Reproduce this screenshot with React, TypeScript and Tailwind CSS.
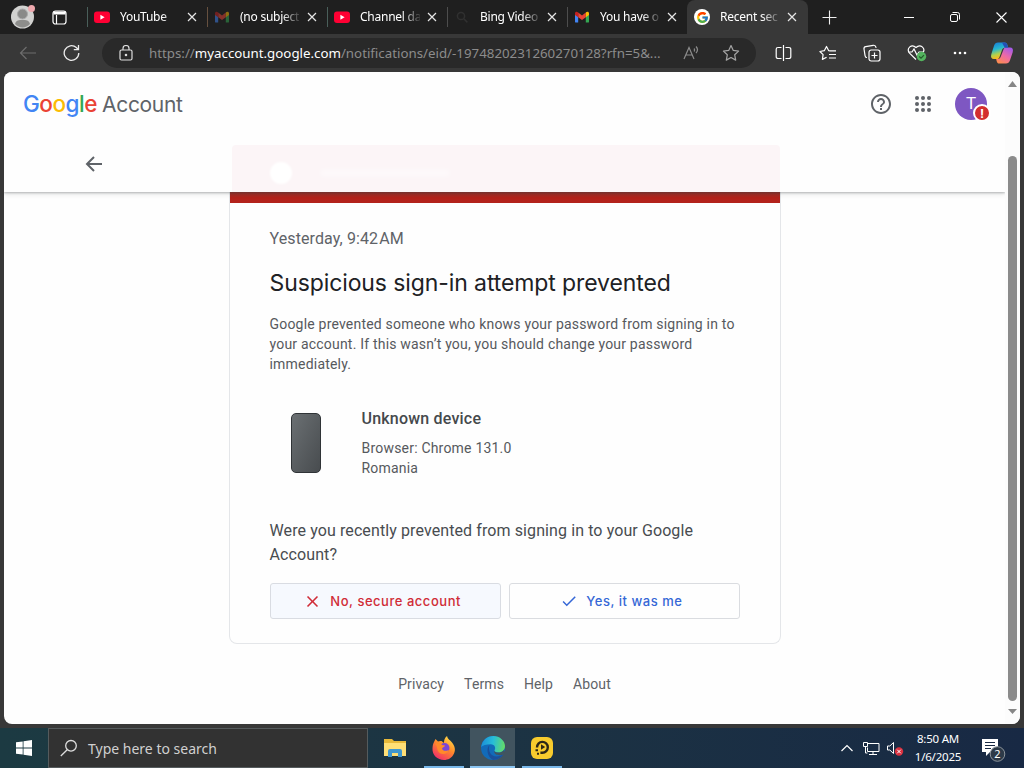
import type { ReactNode } from 'react';
import { FcGoogle } from 'react-icons/fc';
import { MdCheck, MdClose, MdHelpOutline } from 'react-icons/md';

const YouTubeIcon = () => (
  <svg width="16" height="16" viewBox="0 0 16 16">
    <rect x="0" y="2.5" width="16" height="11.5" rx="3" fill="#ff0033" />
    <path d="M6.4 5.8v5l4.2-2.5z" fill="#fff" />
  </svg>
);

const GmailIcon = () => (
  <svg width="16" height="16" viewBox="0 0 16 16">
    <path d="M1 4.5v8.2c0 .5.4.9.9.9h2.3V7z" fill="#4285f4" />
    <path d="M15 4.5v8.2c0 .5-.4.9-.9.9h-2.3V7z" fill="#34a853" />
    <path d="M4.2 3.6v4.6L8 11l3.8-2.8V3.6L8 6.5z" fill="#ea4335" />
    <path d="M1 4.4c0-1.7 1.9-2.1 3.2-.8v4.6L1 5.9z" fill="#c5221f" />
    <path d="M15 4.4c0-1.7-1.9-2.1-3.2-.8v4.6L15 5.9z" fill="#fbbc04" />
  </svg>
);

const SearchTabIcon = () => (
  <svg width="16" height="16" viewBox="0 0 16 16" fill="none" stroke="#303030" strokeWidth="1.5">
    <circle cx="7" cy="7" r="3.6" />
    <path d="M9.8 9.8l3.6 3.6" />
  </svg>
);

const GoogleTabIcon = () => (
  <span className="flex size-4 items-center justify-center rounded-full bg-white">
    <FcGoogle size={13} />
  </span>
);

type Tab = { title: string; icon: ReactNode; line: string; dim?: boolean };

const tabs: Tab[] = [
  { title: 'YouTube', icon: <YouTubeIcon />, line: 'bg-[#4a5f5a]' },
  { title: '(no subject', icon: <GmailIcon />, line: 'bg-[#66503f]', dim: true },
  { title: 'Channel da', icon: <YouTubeIcon />, line: 'bg-[#4a5f5a]' },
  { title: 'Bing Video', icon: <SearchTabIcon />, line: 'bg-[#4d4d4d]' },
  { title: 'You have o', icon: <GmailIcon />, line: 'bg-[#4d4d4d]' },
];

const CloseX = () => (
  <svg width="10" height="10" viewBox="0 0 10 10" stroke="#e6e6e6" strokeWidth="1.2">
    <path d="M1 1l8 8M9 1l-8 8" />
  </svg>
);

const TabTitle = ({ children }: { children: string }) => (
  <span className="ml-[10px] w-[60px] whitespace-nowrap text-[12px] tracking-[-0.25px] text-white [mask-image:linear-gradient(to_right,black_42px,transparent_62px)]">
    {children}
  </span>
);

const TabStrip = () => (
  <div className="flex h-[34px] shrink-0 items-center bg-[#1f1f1f]">
    <div className="flex w-[87px] items-center">
      <svg className="ml-[10px]" width="26" height="26" viewBox="0 0 26 26">
        <circle cx="12.5" cy="13" r="11.5" fill="#d2d2d0" />
        <circle cx="12.5" cy="10" r="5" fill="#8a8a88" stroke="#aaa" />
        <path d="M5 20c1-4 4-4 7.5-4s6.5 0 7.5 4c-4 4.5-11 4.5-15 0z" fill="#8d8d8b" />
        <circle cx="21.5" cy="4.5" r="3.5" fill="#efa9ae" />
      </svg>
      <svg className="ml-4" width="15" height="15" viewBox="0 0 15 15" fill="none" stroke="#fff" strokeWidth="1.2">
        <rect x="1" y="1" width="13" height="13" rx="2.5" />
        <path d="M1.5 3h12" strokeWidth="3" />
        <path d="M4.5 5v9" />
      </svg>
    </div>
    {tabs.map((tab) => (
      <div key={tab.title} className="flex h-full w-[120px] items-center">
        <span className={`h-5 w-px ${tab.line}`} />
        <span className={tab.dim ? 'ml-1.5 opacity-50' : 'ml-1.5'}>{tab.icon}</span>
        <TabTitle>{tab.title}</TabTitle>
        <span className="ml-[7px]">
          <CloseX />
        </span>
      </div>
    ))}
    <div className="flex h-full w-[121px] items-center rounded-t-lg bg-[#383838] pl-[7px]">
      <GoogleTabIcon />
      <TabTitle>Recent sec</TabTitle>
      <span className="ml-[7px]">
        <CloseX />
      </span>
    </div>
    <svg className="ml-[14px]" width="15" height="15" viewBox="0 0 15 15" stroke="#eee" strokeWidth="1.1">
      <path d="M7.5 .5v14M.5 7.5h14" />
    </svg>
    <div className="ml-[67px] flex items-center gap-[36px]">
      <svg width="10" height="10" viewBox="0 0 10 10" stroke="#fff">
        <path d="M0 5.5h10" />
      </svg>
      <svg width="10" height="10" viewBox="0 0 10 10" fill="none" stroke="#fff">
        <rect x=".5" y="2.5" width="7" height="7" rx="1.5" />
        <path d="M2.5 .5h5a2 2 0 0 1 2 2v5" />
      </svg>
      <svg width="11" height="11" viewBox="0 0 11 11" stroke="#fff" strokeWidth="1.1">
        <path d="M.5 .5l10 10M10.5 .5l-10 10" />
      </svg>
    </div>
  </div>
);

const CopilotIcon = () => (
  <svg width="24" height="24" viewBox="0 0 24 24">
    <defs>
      <linearGradient id="cpA" x1="0" y1="0" x2=".3" y2="1">
        <stop offset="0" stopColor="#1677d8" />
        <stop offset=".45" stopColor="#27b7cf" />
        <stop offset=".75" stopColor="#b5d04a" />
        <stop offset="1" stopColor="#ffb61c" />
      </linearGradient>
      <linearGradient id="cpB" x1=".8" y1="0" x2=".2" y2="1">
        <stop offset="0" stopColor="#a45bea" />
        <stop offset=".5" stopColor="#ee6aa6" />
        <stop offset="1" stopColor="#ff8d4d" />
      </linearGradient>
    </defs>
    <path d="M8 1.5h6.500c1.800 0 2.400 1 2.900 2.600l.8 2.600h-3.500c-1.600 0-2.300 1-2.800 2.500L9.500 16c-.5 1.500-1.200 2-2.600 2H4c-2.600 0-3.500-2-2.700-4.800l2.800-8.700C4.800 2.500 6 1.500 8 1.500z" fill="url(#cpA)" />
    <path d="M16 22.500H9.500c-1.800 0-2.400-1-2.900-2.600L6.200 18H8c1.600 0 2.300-1 2.800-2.500l2.700-7c.5-1.500 1.200-2 2.600-2H20c2.600 0 3.500 2 2.700 4.800l-2.800 8.200c-.7 2-1.900 3-3.900 3z" fill="url(#cpB)" />
    <path d="M12 1.500h2.500c1.800 0 2.400 1 2.900 2.600l.8 2.600h-3.500z" fill="#2450b8" />
  </svg>
);

const Toolbar = () => (
  <div className="flex h-[38px] shrink-0 items-center bg-[#383838]">
    <svg className="ml-[19px]" width="18" height="16" viewBox="0 0 18 16" fill="none" stroke="#6d6d6d" strokeWidth="1.2">
      <path d="M17 8H1.500M7.500 2L1.500 8l6 6" />
    </svg>
    <svg className="ml-[26px]" width="17" height="18" viewBox="0 0 17 18" fill="none" stroke="#ececec" strokeWidth="1.3">
      <path d="M15.800 9a7.300 7.300 0 1 1-2.500-5.500L15.300 5.500M15.500 1v4.700h-4.700" />
    </svg>
    <div className="ml-[22px] flex h-[30px] w-[654px] items-center rounded-full bg-[#292929]">
      <svg className="ml-[17px]" width="14" height="16" viewBox="0 0 14 16" fill="none" stroke="#ddd" strokeWidth="1.2">
        <rect x="1" y="5" width="12" height="10" rx="1.5" />
        <path d="M4 5V3.500a3 3 0 0 1 6 0V5" />
        <circle cx="7" cy="10" r=".7" fill="#ddd" />
      </svg>
      <span className="ml-4 mt-px w-[520px] whitespace-nowrap text-[13.3px] text-[#8c8c8c]">
        https://
        <span className="text-white">myaccount.google.com</span>
        /notifications/eid/-1974820231260270128?rfn=5&amp;...
      </span>
      <svg className="ml-[14px]" width="17" height="16" viewBox="0 0 17 16" fill="none" stroke="#8c8c8c" strokeWidth="1.2">
        <path d="M1 14L6 2.500 11 14M2.800 10h6.500M11 3.500q1.300 1.500 0 3M13 1.500q3 3.300 0 6.500" />
      </svg>
      <svg className="ml-[22px]" width="18" height="18" viewBox="0 0 18 18" fill="none" stroke="#a5a5a5" strokeWidth="1.2" strokeLinejoin="round">
        <path d="M9 1.500l2.300 4.900 5.300.7-3.900 3.700 1 5.300L9 13.500l-4.700 2.600 1-5.300L1.400 7.100l5.300-.7z" />
      </svg>
    </div>
    <div className="ml-[19px] flex items-center text-white">
      <svg width="17" height="16" viewBox="0 0 17 16" fill="none" stroke="currentColor" strokeWidth="1.2">
        <path d="M6.500 2.500H3A1.800 1.800 0 0 0 1.200 4.300v7.400A1.800 1.800 0 0 0 3 13.500h3.500M10.500 2.500H14a1.800 1.800 0 0 1 1.800 1.800v7.400a1.800 1.800 0 0 1-1.800 1.800h-3.500M8.500 0v16" />
      </svg>
      <svg className="ml-[27px]" width="18" height="17" viewBox="0 0 18 17" fill="none" stroke="currentColor" strokeWidth="1.2" strokeLinejoin="round">
        <path d="M11 5.800L9.600 5.600 7.500 1.500 5.300 5.700.9 6.500l3.200 3.200-.7 4.700 4.200-2.200M11 5.800h6M10 9.500h7M10 13h7" />
      </svg>
      <svg className="ml-[26px]" width="18" height="18" viewBox="0 0 18 18" fill="none" stroke="currentColor" strokeWidth="1.2">
        <rect x="6" y="6" width="11" height="11" rx="2.2" />
        <path d="M11.500 8.500v6M8.500 11.500h6M4 13.500c-1.200 0-1.700-.8-1.900-1.700L1 5c-.2-1.500.5-2.200 1.700-2.400l7.500-1.300c1.500-.2 2.500.5 2.800 2l.1.500" />
      </svg>
      <svg className="ml-[26px]" width="20" height="18" viewBox="0 0 20 18" fill="none" stroke="currentColor" strokeWidth="1.2">
        <path d="M9 15.500L2.300 8.800C-.8 4.500 4.500-.8 9 3.500c4.500-4.300 9.800 1 7 5M1 8h4l2-3 3 6 2-3h4" />
        <circle cx="14.5" cy="12.5" r="4.7" fill="#54b45f" stroke="none" />
        <path d="M12.300 12.500l1.700 1.700 3-3" stroke="#245a2b" />
      </svg>
      <svg className="ml-[26px]" width="14" height="4" viewBox="0 0 14 4" fill="currentColor">
        <circle cx="2" cy="2" r="1.3" />
        <circle cx="7" cy="2" r="1.3" />
        <circle cx="12" cy="2" r="1.3" />
      </svg>
      <span className="ml-[23px]">
        <CopilotIcon />
      </span>
    </div>
  </div>
);

const Header = () => (
  <header className="relative z-10 h-[120px] bg-[#fefefe] shadow-[0_1px_2px_rgba(60,64,67,0.3),0_2px_5px_rgba(60,64,67,0.15)] [clip-path:inset(0_0_-8px_0)]">
    <div className="flex h-16 items-center pl-[19px] pr-[18px]">
      <div className="flex items-baseline font-['Inter',sans-serif] text-[21px]">
        <span className="w-[79px] text-[22.5px] font-medium tracking-[-0.5px]">
          <span className="text-[#4285f4]">G</span>
          <span className="text-[#ea4335]">o</span>
          <span className="text-[#fbbc04]">o</span>
          <span className="text-[#4285f4]">g</span>
          <span className="text-[#34a853]">l</span>
          <span className="text-[#ea4335]">e</span>
        </span>
        <span className="tracking-[-0.3px] text-[#5f6368]">Account</span>
      </div>
      <MdHelpOutline className="ml-auto" size={24} color="#5f6368" />
      <svg className="ml-[22px]" width="16" height="16" viewBox="0 0 16 16" fill="#5f6368">
        {[2, 8, 14].map((y) => [2, 8, 14].map((x) => <circle key={`${x}-${y}`} cx={x} cy={y} r="2" />))}
      </svg>
      <div className="relative ml-6 flex size-8 items-center justify-center rounded-full bg-[#7e57c2] font-['Roboto',sans-serif] text-[17px] text-white">
        T
        <span className="absolute left-[18px] top-4 flex size-[18px] items-center justify-center rounded-full border-2 border-white bg-[#d32f2f] text-[13px] font-bold leading-none">
          !
        </span>
      </div>
    </div>
    <div className="flex h-14">
      <div className="flex w-[228px] items-center pl-[81px]">
        <svg width="18" height="16" viewBox="0 0 18 16" fill="none" stroke="#5f6368" strokeWidth="2">
          <path d="M17 8H2.500M9 1L2 8l7 7" />
        </svg>
      </div>
      {/* banner showing faintly through the header */}
      <div className="mt-[9px] flex w-[548px] items-center rounded-t bg-[#fcf5f7] pl-[38px] pt-2">
        <span className="size-[22px] rounded-full bg-white blur-[1px]" />
        <span className="ml-7 h-2 w-[130px] rounded bg-white/40 blur-[2px]" />
      </div>
    </div>
  </header>
);

const SecurityCard = () => (
  <main className="ml-[225px] w-[552px] rounded-b-lg border border-t-0 border-[#e4e6e9] font-['Roboto',sans-serif] text-[#3c4043]">
    <div className="h-[11px] bg-gradient-to-b from-[#8f2d28] via-[#b3221b] via-50% to-[#b3221b]" />
    <div className="pb-6 pl-[39.5px] pr-[40px] pt-6">
      <p className="text-base leading-6 tracking-[0.1px] text-[#5f6368]">
        Yesterday, 9:42<span className="ml-px">AM</span>
      </p>
      <h1 className="mt-4 whitespace-nowrap font-['Inter',sans-serif] text-[23px] font-normal leading-8 tracking-[-0.1px] text-[#202124]">
        Suspicious sign-in attempt prevented
      </h1>
      <p className="mt-[15px] text-sm leading-5 tracking-[0.2px] text-[#56595d]">
        Google prevented someone who knows your password from signing in to
        <br />
        your account. If this wasn’t you, you should change your password
        <br />
        immediately.
      </p>
      <div className="mt-[33px] flex">
        <div className="ml-[21.5px] mt-[6px] h-[60px] w-[30px] rounded-[5px] border border-[#303437] bg-gradient-to-br from-[#6b7073] to-[#484c4f]" />
        <div className="ml-[40.5px] text-sm leading-5 tracking-[0.2px] text-[#56595d]">
          <h2 className="mb-[7px] text-base font-medium leading-6 tracking-[0.2px] text-[#45494c]">Unknown device</h2>
          <p>Browser: Chrome 131.0</p>
          <p>Romania</p>
        </div>
      </div>
      <p className="mt-[41px] text-base leading-6 tracking-[0.1px] text-[#484c50]">
        Were you recently prevented from signing in to your Google
        <br />
        Account?
      </p>
      <div className="mt-4 flex gap-2 font-['Inter',sans-serif] text-[13px] font-medium tracking-[0.53px]">
        <button className="flex h-9 flex-1 items-center justify-center gap-2 rounded-[3px] border border-[#d9dce2] bg-[#f6f9fe] pr-1.5 text-[#d02c37]">
          <MdClose size={19} />
          <span className="pt-0.5">No, secure account</span>
        </button>
        <button className="flex h-9 flex-1 items-center justify-center gap-2 rounded-[3px] border border-[#dadce0] pr-1.5 text-[#3567d6]">
          <MdCheck size={18} />
          <span className="pt-0.5">Yes, it was me</span>
        </button>
      </div>
    </div>
  </main>
);

const ScrollBar = () => (
  <div className="flex w-[15px] flex-col items-center bg-[#fcfcfc]">
    <svg className="mt-[9px]" width="9" height="6" viewBox="0 0 9 6" fill="#868686">
      <path d="M0 6L4.500 0 9 6z" />
    </svg>
    <div className="mt-[69px] h-[545px] w-[9px] rounded-full bg-[#8b8b8b]" />
    <svg className="mt-2" width="9" height="5" viewBox="0 0 9 5" fill="#868686">
      <path d="M0 0h9L4.500 5z" />
    </svg>
  </div>
);

const Taskbar = () => (
  <div className="flex h-10 shrink-0 bg-gradient-to-r from-[#1c3a42] via-[#1c3343] to-[#182944] text-white">
    <div className="flex w-12 items-center justify-center">
      <svg width="16" height="16" viewBox="0 0 16 16" fill="#fff">
        <path d="M0 2.300l6.700-.9v6.200H0zM7.500 1.300L16 .1v7.500H7.500zM0 8.400h6.700v6.200L0 13.700zM7.500 8.400H16v7.500l-8.500-1.200z" />
      </svg>
    </div>
    <div className="flex w-[320px] items-center border border-[#555b5d] bg-[#323232]">
      <svg className="ml-[11px]" width="18" height="18" viewBox="0 0 18 18" fill="none" stroke="#dedede" strokeWidth="1.3">
        <circle cx="11" cy="6.8" r="5.3" />
        <path d="M7.200 10.700L.8 17" />
      </svg>
      <span className="ml-[10px] mt-px text-[14px] text-[#d0d0d0]">Type here to search</span>
    </div>
    <div className="ml-0.5 flex">
      <div className="flex w-[49px] items-center justify-center">
        <svg width="22" height="20" viewBox="0 0 22 20">
          <path d="M0 1h8l2 2h12v15H0z" fill="#e8b93a" />
          <path d="M0 5h22v13H0z" fill="#ffdf76" />
          <path d="M4 19v-6q0-2 2-2h10q2 0 2 2v6h-4v-4H8v4z" fill="#4097cf" />
        </svg>
      </div>
      <div className="flex w-[49px] flex-col items-center">
        <svg className="mt-2" width="24" height="24" viewBox="0 0 24 24">
          <defs>
            <linearGradient id="ffx" x1=".8" y1="0" x2=".2" y2="1">
              <stop offset="0" stopColor="#ffe14a" />
              <stop offset=".45" stopColor="#ff8a2a" />
              <stop offset="1" stopColor="#f0266f" />
            </linearGradient>
          </defs>
          <path d="M2 6l1.500-3L6 5.500c1-.5 2-.7 3.500-.5L12 7c0-3 .5-5 3-7 .5 3 3 4 5 6.500 2.500 3 4 7 2 11C20 22 16 24 12 24 5.500 24 0 19 .5 12.500.6 10 1 8 2 6z" fill="url(#ffx)" />
          <circle cx="12.5" cy="12" r="5" fill="#7b45d6" />
          <path d="M3 8c3-2 6-1 7 1l3 .5c0 1.500-2.500 1.700-3 3 .5 3 5 2.500 7 1.500-2 5-9 5-11 1C4.800 12.500 5.500 10 3 8z" fill="#ff8a2a" />
        </svg>
        <span className="mt-auto h-0.5 w-10 bg-[#79b8ea]" />
      </div>
      <div className="flex w-[49px] flex-col items-center">
        <div className="flex h-full w-[45px] flex-col items-center bg-[#41545f]">
          <svg className="mt-2" width="24" height="24" viewBox="0 0 24 24">
            <defs>
              <linearGradient id="edgeA" x1="0" y1=".3" x2="1" y2=".4">
                <stop offset="0" stopColor="#1c8ed8" />
                <stop offset=".5" stopColor="#27bdd8" />
                <stop offset="1" stopColor="#64dc68" />
              </linearGradient>
            </defs>
            <circle cx="12" cy="12" r="12" fill="#126bb9" />
            <path d="M.2 11C1 4.500 6 0 12.300 0 19 0 24 5 24 10c0 4-3 6.500-6.500 6.500-3 0-4.500-1.200-4-2.200 1.500-2 .5-6-3.800-6C5 8.300 1.500 9.500.2 11z" fill="url(#edgeA)" />
            <path d="M8.500 9c-2 6 1.500 11.500 7 11.500 2.500 0 5-1 6.500-1.700C20 22 16 24 12 24 6 21 5 12 8.500 9z" fill="#1b4f9a" />
            <path d="M13.500 14.300c-.5 1 1 2.200 4 2.200 2 0 4-.8 5.200-2.300l1.500 2-2.200 2.600c-5 1-10 0-8.500-4.500z" fill="#41545f" />
          </svg>
          <span className="mt-auto h-0.5 w-full bg-[#8bc5f2]" />
        </div>
      </div>
      <div className="flex w-[49px] flex-col items-center">
        <svg className="mt-2" width="24" height="24" viewBox="0 0 24 24" fill="none">
          <rect x="1" y="1" width="22" height="22" rx="6" fill="#f7cb2d" />
          <path d="M7 11.500A5.400 5.400 0 1 1 12.400 16.700h-2" stroke="#2c2718" strokeWidth="2.4" />
          <path d="M11 8.300v5.400l4.200-2.700z" fill="#2c2718" />
          <path d="M5.500 14.300h2.500M7 17.800h2" stroke="#2c2718" strokeWidth="2" />
        </svg>
        <span className="mt-auto h-0.5 w-10 bg-[#79b8ea]" />
      </div>
    </div>
    <div className="ml-auto flex items-center">
      <svg width="12" height="8" viewBox="0 0 12 8" fill="none" stroke="#fff" strokeWidth="1.2">
        <path d="M.5 7L6 1.500 11.500 7" />
      </svg>
      <svg className="ml-[10px]" width="17" height="15" viewBox="0 0 17 15" fill="none" stroke="#fff">
        <path d="M5 2.500h11v8H4.500v-4M10 10.500v3M6 13.500h8M.5 1.500h4v4h-4zM2.500 5.500v6.500h2" />
      </svg>
      <svg className="ml-[7px]" width="17" height="15" viewBox="0 0 17 15" fill="none" stroke="#fff">
        <path d="M.5 5h2.300L6.500 1.500v11L2.800 9H.5z" />
        <circle cx="12" cy="10.5" r="4.2" fill="#d9303f" stroke="none" />
        <path d="M10.200 8.700l3.600 3.600M13.800 8.700l-3.600 3.600" />
      </svg>
      <div className="ml-[10px] w-[48px] whitespace-nowrap text-center text-[11.5px] leading-[18px] tracking-[-0.2px]">
        <p>8:50 AM</p>
        <p>1/6/2025</p>
      </div>
      <svg className="ml-[19px] mr-[17px] mt-1" width="26" height="25" viewBox="0 0 26 25">
        <path d="M1 1h16v13H9l-4 4v-4H1z" fill="#fff" />
        <path d="M4 4.500h10M4 7.500h10M4 10.500h6" stroke="#182944" />
        <circle cx="16.5" cy="16" r="7.3" fill="#2d3a48" stroke="#8c949c" />
        <text x="16.5" y="20" fill="#fff" fontSize="11" textAnchor="middle">2</text>
      </svg>
    </div>
  </div>
);

const App = () => (
  <div className="flex h-[768px] w-[1024px] flex-col overflow-hidden bg-[#383838] font-['Noto_Sans','Open_Sans',sans-serif]">
    <TabStrip />
    <Toolbar />
    <div className="mx-1 mb-1 flex flex-1 overflow-hidden rounded-lg bg-[#fefefe]">
      <div className="w-[1001px]">
        <Header />
        <SecurityCard />
        <footer className="mt-[30px] flex justify-center gap-5 font-['Roboto',sans-serif] text-sm leading-5 tracking-[0.1px] text-[#5f6368]">
          <a>Privacy</a>
          <a>Terms</a>
          <a>Help</a>
          <a>About</a>
        </footer>
      </div>
      <ScrollBar />
    </div>
    <Taskbar />
  </div>
);

export default App;
